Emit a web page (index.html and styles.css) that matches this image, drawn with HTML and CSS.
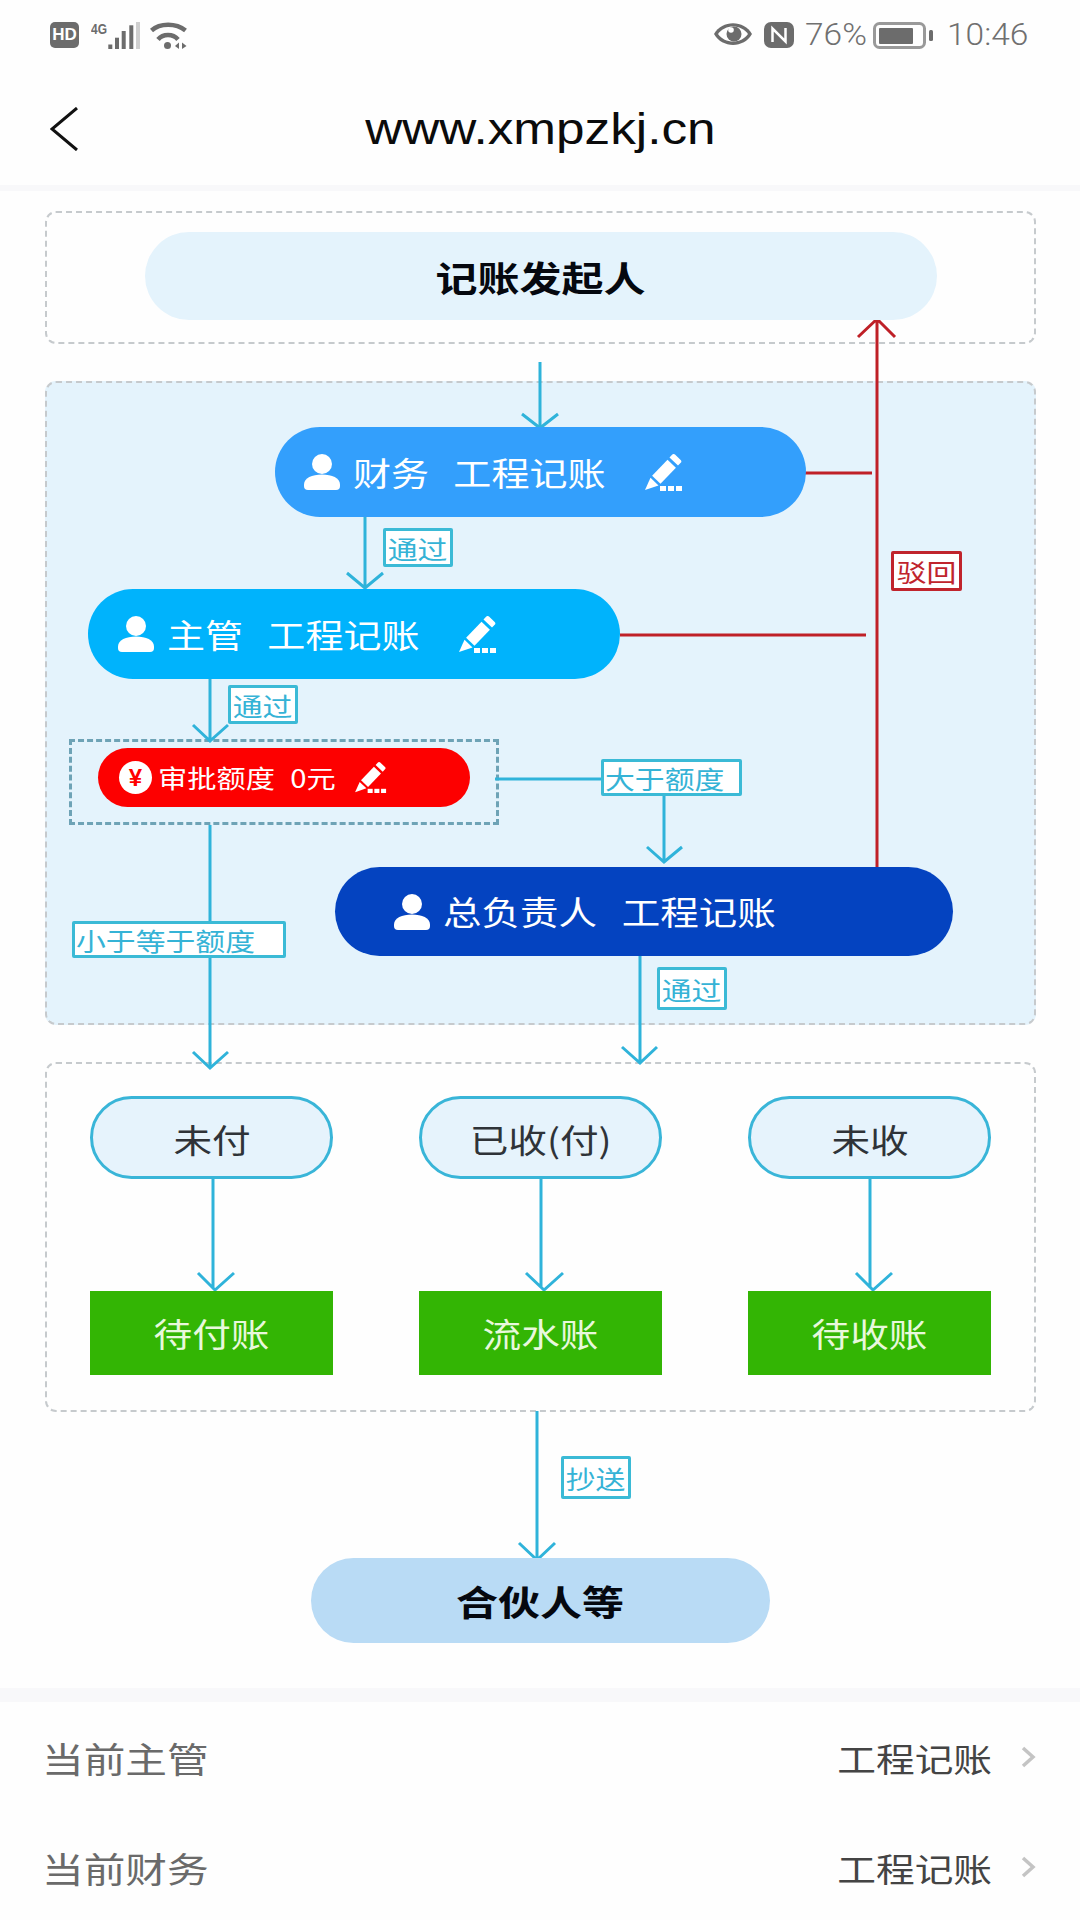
FILE: index.html
```
<!DOCTYPE html>
<html lang="zh-CN">
<head>
<meta charset="utf-8">
<title>www.xmpzkj.cn</title>
<link rel="stylesheet" href="styles.css">
</head>
<body>
<svg class="defs" aria-hidden="true">
  <symbol id="person" viewBox="0 0 36 36">
    <ellipse cx="18" cy="10" rx="10" ry="10"/>
    <path d="M0 30.500C0 24 8 20.500 18 20.500S36 24 36 30.500V32a4 4 0 0 1-4 4H4a4 4 0 0 1-4-4z"/>
  </symbol>
  <symbol id="pencil" viewBox="0 0 38 37">
    <path d="M24.500 3.500l2.800-2.900a2 2 0 0 1 2.700 0l5.700 5.400a2 2 0 0 1 0 2.800l-2.700 2.800z"/>
    <path d="M22.500 5.800l8.400 8-15.400 16-8.400-8z"/>
    <path d="M5.500 23.800l8 7.600L0 36z"/>
    <rect x="15" y="32" width="6" height="5"/>
    <rect x="23" y="32" width="6" height="5"/>
    <rect x="31" y="32" width="6" height="5"/>
  </symbol>
</svg>

<header class="status">
  <div class="status-group">
    <span class="hd">HD</span>
    <svg class="signal" viewBox="0 0 49 27">
      <text class="net" x="0" y="12" textLength="16" lengthAdjust="spacingAndGlyphs">4G</text>
      <rect x="17.300" y="22.500" width="4" height="4.500"/>
      <rect x="24" y="15.700" width="4" height="11.300"/>
      <rect x="30.700" y="9" width="4" height="18"/>
      <rect x="38.300" y="3.300" width="4" height="23.700"/>
      <rect class="faint" x="45" y="0" width="4" height="27"/>
    </svg>
    <svg class="wifi" viewBox="0 0 37 27">
      <path d="M1.500 8.500C10 .8 26 .8 35.500 8.500"/>
      <path d="M8 17.500C13 11.500 23 11.500 28 17.500"/>
      <circle cx="17.500" cy="23.500" r="3.500"/>
      <polygon points="25,24 29,20.500 29,27"/>
      <polygon points="36.500,24 32,20.500 32,27"/>
    </svg>
  </div>
  <div class="status-group">
    <svg class="eye" viewBox="0 0 38 22">
      <path d="M0 11C8-3.500 30-3.500 38 11 30 25.500 8 25.500 0 11z"/>
      <path class="eye-white" d="M4 11C11 1 27 1 34 11 27 21 11 21 4 11z"/>
      <circle cx="20" cy="11" r="7.500"/>
      <circle class="eye-white" cx="17" cy="7" r="2.800"/>
    </svg>
    <svg class="nfc" viewBox="0 0 30 26">
      <rect width="30" height="26" rx="7"/>
      <path d="M8.500 20V6.500L21.500 19.500V6"/>
    </svg>
    <span class="status-text pct">76%</span>
    <svg class="battery" viewBox="0 0 60 27">
      <rect class="batt-shell" x="1.500" y="1.500" width="50" height="24" rx="5"/>
      <rect x="6" y="6" width="34" height="16" rx="1"/>
      <rect x="56" y="8" width="4" height="11" rx="1.500"/>
    </svg>
    <span class="status-text clock">10:46</span>
  </div>
</header>

<nav class="nav">
  <div class="nav-side">
    <svg class="back" viewBox="0 0 28 44"><polyline points="27,1 2,22 27,43"/></svg>
  </div>
  <div class="title">www.xmpzkj.cn</div>
  <div class="nav-side"></div>
</nav>

<div class="strip strip-top"></div>

<main class="canvas">
  <div class="group group-start"></div>
  <div class="group group-flow"></div>
  <div class="group group-result"></div>
  <div class="limit-box"></div>

  <svg class="wires" viewBox="0 191 1080 1497">
    <g class="wire">
      <path d="M540 362V428M522 414L540 428L558 414"/>
      <path d="M365 517V588M347 573L365 588L383 573"/>
      <path d="M210 679V741M193 725L210 741L228 725"/>
      <path d="M210 825V1068M193 1052L210 1068L228 1052"/>
      <path d="M495 779H601M664 796V862M647 847L664 862L682 847"/>
      <path d="M640 956V1063M622 1047L640 1063L657 1047"/>
      <path d="M213 1179V1288M198 1273L215 1290L234 1273"/>
      <path d="M541 1179V1288M526 1273L544 1290L563 1273"/>
      <path d="M870 1179V1288M856 1273L873 1290L892 1273"/>
      <path d="M537 1411V1558M519 1543L537 1560L555 1543"/>
    </g>
    <g class="wire-red">
      <path d="M877 867V319M858 337L877 319L895 337"/>
      <path d="M805 473H872"/>
      <path d="M620 635H866"/>
    </g>
  </svg>

  <div class="node start-node"><span class="wide strong">记账发起人</span></div>

  <div class="node pill-person finance">
    <svg class="person"><use href="#person"/></svg>
    <span class="wide-l role">财务 工程记账</span>
    <svg class="pencil"><use href="#pencil"/></svg>
  </div>
  <div class="node pill-person manager">
    <svg class="person"><use href="#person"/></svg>
    <span class="wide-l role">主管 工程记账</span>
    <svg class="pencil"><use href="#pencil"/></svg>
  </div>
  <div class="node limit-pill">
    <span class="yen">¥</span>
    <span class="wide-l limit-text">审批额度 0元</span>
    <svg class="pencil-sm"><use href="#pencil"/></svg>
  </div>
  <div class="node pill-person chief">
    <svg class="person"><use href="#person"/></svg>
    <span class="wide-l role role-wide">总负责人 工程记账</span>
  </div>

  <div class="node tag pass-1"><span class="wide">通过</span></div>
  <div class="node tag pass-2"><span class="wide">通过</span></div>
  <div class="node tag pass-3"><span class="wide">通过</span></div>
  <div class="node tag over"><span class="wide-l">大于额度</span></div>
  <div class="node tag under"><span class="wide-l">小于等于额度</span></div>
  <div class="node tag copy"><span class="wide">抄送</span></div>
  <div class="node tag reject"><span class="wide">驳回</span></div>

  <div class="node oval col-a"><span class="wide">未付</span></div>
  <div class="node oval col-b"><span class="wide">已收(付)</span></div>
  <div class="node oval col-c"><span class="wide">未收</span></div>

  <div class="node ledger col-a"><span class="wide">待付账</span></div>
  <div class="node ledger col-b"><span class="wide">流水账</span></div>
  <div class="node ledger col-c"><span class="wide">待收账</span></div>

  <div class="node end-node"><span class="wide strong">合伙人等</span></div>
</main>

<div class="strip strip-mid"></div>

<section class="rows">
  <div class="row">
    <span class="row-label">当前主管</span>
    <div class="row-end">
      <span class="row-value">工程记账</span>
      <svg class="chev" viewBox="0 0 15 22"><polyline points="2,2 12,11 2,20"/></svg>
    </div>
  </div>
  <div class="row">
    <span class="row-label">当前财务</span>
    <div class="row-end">
      <span class="row-value">工程记账</span>
      <svg class="chev" viewBox="0 0 15 22"><polyline points="2,2 12,11 2,20"/></svg>
    </div>
  </div>
</section>
</body>
</html>
```

FILE: styles.css
```
html, body {
  margin: 0;
  padding: 0;
  width: 1080px;
  height: 1920px;
  overflow: hidden;
  background: #fefefe;
  font-family: "Noto Sans CJK SC", "Noto Sans", sans-serif;
}

.defs { position: absolute; width: 0; height: 0; }

/* status bar */
.status {
  height: 76px;
  box-sizing: border-box;
  padding: 21px 50px 0;
  display: flex;
  justify-content: space-between;
  align-items: flex-start;
  color: #707070;
}
.status-group { display: flex; align-items: center; height: 28px; }
.hd {
  width: 29px;
  height: 26px;
  border-radius: 5px;
  background: #6c6c6c;
  color: #fff;
  font: 700 17px/26px "Liberation Sans", sans-serif;
  text-align: center;
}
.signal { width: 49px; height: 27px; margin-left: 12px; fill: #6c6c6c; }
.signal .net { font: 700 14px "Liberation Sans", sans-serif; }
.signal .faint { fill: #cfcfcf; }
.wifi { width: 37px; height: 27px; margin-left: 10px; fill: #6c6c6c; }
.wifi path { fill: none; stroke: #6c6c6c; stroke-width: 4.500; }
.eye { width: 38px; height: 22px; margin-top: -3px; fill: #6c6c6c; }
.eye .eye-white { fill: #fff; }
.nfc { width: 30px; height: 26px; margin-left: 12px; fill: #6c6c6c; }
.nfc path { fill: none; stroke: #fff; stroke-width: 2.500; }
.status-text {
  display: inline-block;
  font: 300 31px/28px Roboto, sans-serif;
  color: #707070;
  transform-origin: left center;
  transform: scaleX(1.080);
}
.pct { margin-left: 11px; width: 57px; }
.battery { width: 60px; height: 27px; margin-left: 11px; fill: #6c6c6c; }
.battery .batt-shell { fill: none; stroke: #999; stroke-width: 3; }
.clock { margin-left: 14px; margin-right: 6px; width: 77px; }

/* nav */
.nav {
  height: 109px;
  box-sizing: border-box;
  padding-bottom: 3px;
  display: grid;
  grid-template-columns: 1fr auto 1fr;
  align-items: center;
}
.nav-side { padding-left: 50px; display: flex; align-items: center; }
.back { width: 28px; height: 44px; fill: none; stroke: #111; stroke-width: 3; }
.title {
  font: 400 44px/1 "Liberation Sans", sans-serif;
  color: #0b0b0b;
  transform: scaleX(1.165);
}

.strip { background: #f8f8fa; }
.strip-top { height: 6px; }
.strip-mid { height: 14px; }

/* diagram canvas */
.canvas { position: relative; height: 1497px; }
.wires { position: absolute; left: 0; top: 0; width: 1080px; height: 1497px; }
.wire path { fill: none; stroke: #2fb3da; stroke-width: 3; }
.wire-red path { fill: none; stroke: #bf2027; stroke-width: 3; }

.group {
  position: absolute;
  left: 45px;
  width: 991px;
  box-sizing: border-box;
  border: 2.500px dashed #c6cacd;
  border-radius: 11px;
}
.group-start { top: 20px; height: 133px; }
.group-flow { top: 190px; height: 644px; background: #e4f3fc; }
.group-result { top: 871px; height: 350px; }
.limit-box {
  position: absolute;
  left: 69px;
  top: 548px;
  width: 430px;
  height: 86px;
  box-sizing: border-box;
  border: 3px dashed #6ea3b6;
}

.node {
  position: absolute;
  box-sizing: border-box;
  display: flex;
  align-items: center;
  justify-content: center;
  line-height: 1;
  white-space: nowrap;
}
.wide, .wide-l { display: inline-block; transform: scaleX(1.170); }
.wide-l { transform-origin: left center; }
.wide.strong { font-size: 35px; font-weight: 700; color: #05080f; transform: scaleX(1.200); }

.start-node {
  left: 145px; top: 41px; width: 792px; height: 88px;
  border-radius: 44px;
  background: #e4f3fc;
}
.end-node {
  left: 311px; top: 1367px; width: 459px; height: 85px;
  border-radius: 43px;
  background: #b9dbf5;
}

.pill-person {
  justify-content: flex-start;
  border-radius: 45px;
  color: #fff;
}
.person { width: 36px; height: 36px; fill: #fff; flex: none; }
.role { margin-left: 13px; font-size: 32.500px; word-spacing: 13.500px; }
.wide-l.role-wide { transform: scaleX(1.185); }
.pencil { width: 38px; height: 37px; margin-left: 76px; fill: #fff; flex: none; }
.finance { left: 275px; top: 236px; width: 531px; height: 90px; padding-left: 29px; background: #339ffc; }
.manager { left: 88px; top: 398px; width: 532px; height: 90px; padding-left: 30px; background: #00b3fc; }
.chief { left: 335px; top: 676px; width: 618px; height: 89px; padding-left: 59px; background: #0443c0; }

.limit-pill {
  left: 98px; top: 557px; width: 372px; height: 59px;
  padding-left: 21px;
  justify-content: flex-start;
  border-radius: 30px;
  background: #fd0000;
  color: #fff;
}
.yen {
  width: 33px; height: 33px;
  border-radius: 50%;
  background: #fff;
  color: #f00;
  font: 700 24px/33px "Liberation Sans", sans-serif;
  text-align: center;
  flex: none;
}
.limit-text { margin-left: 6px; font-size: 25px; word-spacing: 7.500px; }
.pencil-sm { width: 32px; height: 31px; margin-left: 45px; fill: #fff; flex: none; }

.tag {
  border: 3px solid #3bbad6;
  border-radius: 2px;
  background: #fff;
  color: #35b3d6;
  font-size: 25.500px;
}
.pass-1 { left: 383px; top: 337px; width: 70px; height: 39px; }
.pass-2 { left: 228px; top: 494px; width: 70px; height: 39px; }
.pass-3 { left: 657px; top: 776px; width: 70px; height: 43px; }
.over { left: 601px; top: 568px; width: 141px; height: 37px; justify-content: flex-start; padding-left: 1px; }
.under { left: 72px; top: 730px; width: 214px; height: 37px; justify-content: flex-start; padding-left: 1px; }
.copy { left: 561px; top: 1265px; width: 70px; height: 43px; }
.reject {
  left: 891px; top: 360px; width: 71px; height: 40px;
  border-color: #c0242c;
  color: #c0242c;
}

.col-a { left: 90px; }
.col-b { left: 419px; }
.col-c { left: 748px; }
.oval {
  top: 905px; width: 243px; height: 83px;
  box-sizing: border-box;
  padding-top: 3px;
  border: 3px solid #39b5d8;
  border-radius: 42px;
  background: #e6f3fc;
  color: #2f3338;
  font-size: 33px;
}
.ledger {
  top: 1100px; width: 243px; height: 84px;
  background: #33b504;
  color: #e8f8dc;
  font-size: 33px;
}

/* rows */
.rows { display: flex; flex-direction: column; }
.row {
  height: 110px;
  box-sizing: border-box;
  padding: 0 44px 0 42px;
  display: flex;
  align-items: center;
  justify-content: space-between;
}
.row-label {
  display: inline-block;
  font-size: 35px;
  color: #6a6a6a;
  transform-origin: left center;
  transform: scaleX(1.190);
}
.row-end { display: flex; align-items: center; }
.row-value {
  display: inline-block;
  font-size: 32.500px;
  color: #444;
  transform-origin: right center;
  transform: scaleX(1.190);
}
.chev { width: 15px; height: 22px; margin-left: 29px; fill: none; stroke: #c4c4c4; stroke-width: 3.500; }
```
